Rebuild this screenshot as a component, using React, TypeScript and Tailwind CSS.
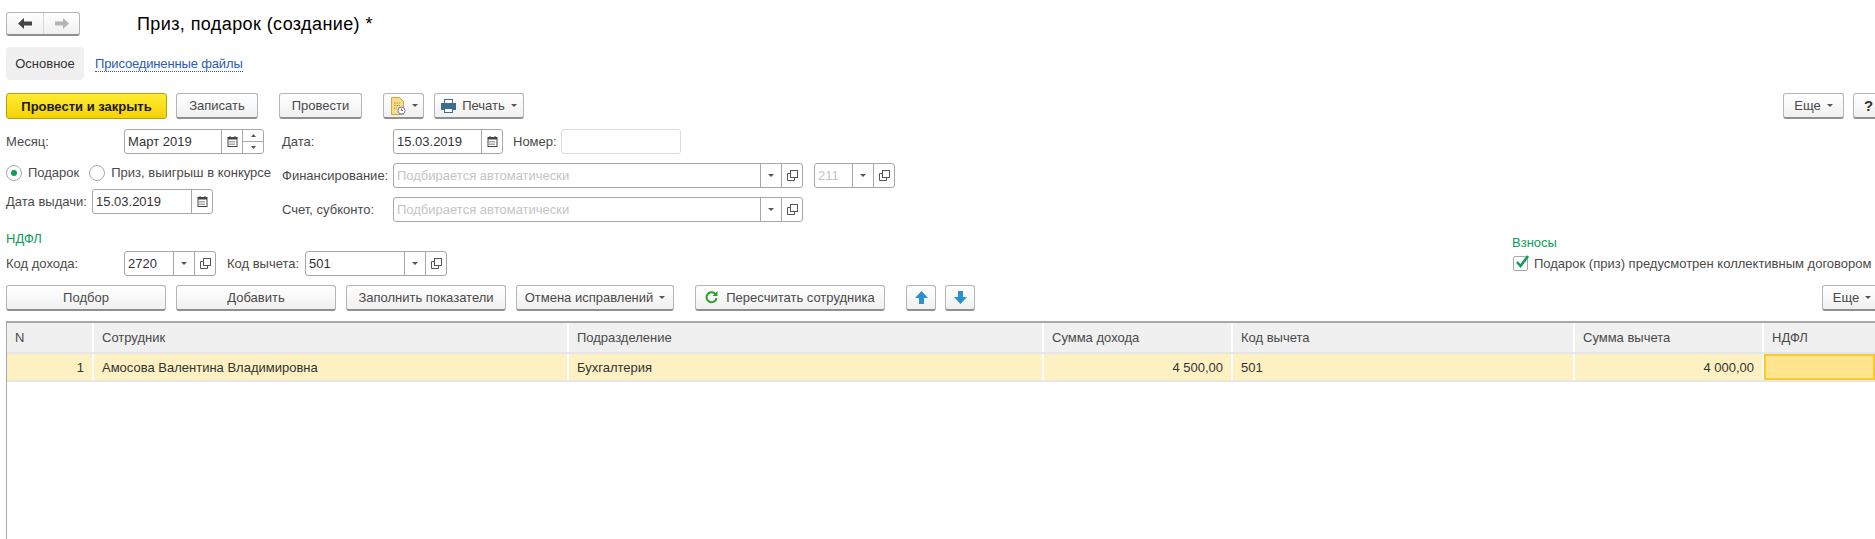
import React from "react";

const btn = "flex items-center justify-center shrink-0 bg-gradient-to-b from-white to-[#f0f0f0] border border-[#b5b5b5] border-b-2 border-b-[#8f8f8f] rounded-[3px] text-[#4a4a4a]";

function Caret({ cls = "" }: { cls?: string }) {
  return <svg width="6" height="3" viewBox="0 0 6 3" className={cls}><path d="M0 0h6L3 3z" fill="#555" /></svg>;
}
function Cal() {
  return (
    <svg width="11" height="11" viewBox="0 0 11 11">
      <rect x="1" y="1.5" width="9" height="9" fill="none" stroke="#444" />
      <rect x="1" y="1" width="9" height="2.5" fill="#444" />
      <path d="M3 0v2M8 0v2" stroke="#444" />
      <path d="M2.5 5.5h6M2.5 7h6M2.5 8.5h6" stroke="#555" strokeDasharray="1 1" />
    </svg>
  );
}
function Open() {
  return (
    <svg width="11" height="11" viewBox="0 0 11 11" fill="none" stroke="#555">
      <rect x="3.5" y="0.5" width="7" height="7" />
      <path d="M3.5 3.5h-3v7h7v-3" />
    </svg>
  );
}
function Cell({ w, children }: { w: string; children: React.ReactNode }) {
  return <div className={`${w} flex items-center justify-center shrink-0 h-full border-l border-[#a8a8a8]`}>{children}</div>;
}
function Field({ w, text, muted, tail, cls = "" }: { w: string; text?: string; muted?: boolean; tail: React.ReactNode; cls?: string }) {
  return (
    <div className={`${w} ${cls} h-[25px] shrink-0 flex items-center border border-[#a8a8a8] rounded-[3px] bg-white overflow-hidden`}>
      <span className={`flex-1 pl-[3px] whitespace-nowrap overflow-hidden ${muted ? "text-[#c4c4c4]" : "text-[#333]"}`}>{text}</span>
      {tail}
    </div>
  );
}
const Pick = () => (
  <>
    <Cell w="w-[21px]"><Caret /></Cell>
    <Cell w="w-[21px]"><Open /></Cell>
  </>
);

const cols: { w: string; head: string; val: string; right?: boolean }[] = [
  { w: "w-[87px]", head: "N", val: "1", right: true },
  { w: "w-[475px]", head: "Сотрудник", val: "Амосова Валентина Владимировна" },
  { w: "w-[475px]", head: "Подразделение", val: "Бухгалтерия" },
  { w: "w-[189px]", head: "Сумма дохода", val: "4 500,00", right: true },
  { w: "w-[342px]", head: "Код вычета", val: "501" },
  { w: "w-[189px]", head: "Сумма вычета", val: "4 000,00", right: true },
];

export default function App() {
  return (
    <div className="w-[1875px] h-[539px] overflow-hidden bg-white text-[13px] leading-none text-[#4a4a4a] font-['Liberation_Sans',Arial,sans-serif]">
      {/* title */}
      <div className="flex items-center h-[24px] mt-[12px] ml-[6px]">
        <div className="flex h-[24px] w-[74px] border border-[#b5b5b5] border-b-2 border-b-[#8f8f8f] rounded-[3px] bg-gradient-to-b from-white to-[#f0f0f0]">
          <div className="w-[37px] flex items-center justify-center border-r border-[#d8d8d8]">
            <svg width="14" height="11" viewBox="0 0 14 11"><path d="M6 0v3.500h8v4H6V11L0 5.500z" fill="#444" /></svg>
          </div>
          <div className="flex-1 flex items-center justify-center">
            <svg width="14" height="11" viewBox="0 0 14 11"><path d="M8 0v3.500H0v4h8V11l6-5.500z" fill="#b4b4b4" /></svg>
          </div>
        </div>
        <h1 className="ml-[57px] text-[18px] text-black tracking-[0.4px] whitespace-nowrap">Приз, подарок (создание) *</h1>
      </div>
      {/* tabs */}
      <div className="flex items-center h-[33px] mt-[11px] ml-[6px]">
        <div className="w-[78px] h-full bg-[#f0f0f0] rounded-[4px] flex items-center justify-center text-[#333]">Основное</div>
        <a className="ml-[11px] text-[#2c5bb5] border-b border-dotted border-[#2c5bb5] leading-[15px] tracking-[-0.15px]">Присоединенные файлы</a>
      </div>
      {/* command bar */}
      <div className="flex items-center h-[26px] mt-[13px] ml-[6px]">
        <button className="w-[161px] h-[26px] flex items-center justify-center bg-gradient-to-b from-[#ffec30] to-[#f5d200] border border-[#b9a000] rounded-[3px] text-[#1a1a00] font-bold">Провести и закрыть</button>
        <button className={`${btn} w-[82px] h-[26px] ml-[9px]`}>Записать</button>
        <button className={`${btn} w-[83px] h-[26px] ml-[21px]`}>Провести</button>
        <button className={`${btn} w-[41px] h-[26px] ml-[21px] gap-[6px]`}>
          <svg width="16" height="18" viewBox="0 0 16 18">
            <path d="M1.500.5h8l4 4v13h-12z" fill="#f6dc8e" stroke="#c9a94a" />
            <path d="M4 6h6M4 8.500h6M4 11h3" stroke="#b5923a" strokeDasharray="1.500 1" />
            <circle cx="11.500" cy="13.500" r="3.500" fill="#fff" stroke="#5e7fb5" />
            <path d="M11.500 11.500v2h1.500" stroke="#c8453a" fill="none" />
          </svg>
          <Caret />
        </button>
        <button className={`${btn} w-[90px] h-[26px] ml-[10px] gap-[6px]`}>
          <svg width="15" height="14" viewBox="0 0 15 14">
            <rect x="3.500" y="0.500" width="8" height="4" fill="#fff" stroke="#3f6d8c" />
            <path d="M0 4h15v7h-3v-2H3v2H0z" fill="#3f6d8c" />
            <rect x="3.500" y="9.500" width="8" height="4" fill="#fff" stroke="#3f6d8c" />
          </svg>
          Печать
          <Caret />
        </button>
        <div className="flex-1" />
        <button className={`${btn} w-[61px] h-[26px] gap-[6px]`}>Еще <Caret /></button>
        <button className={`${btn} w-[40px] h-[26px] ml-[9px] -mr-[18px] font-bold text-[#333] justify-start pl-[10px] text-[15px]`}>?</button>
      </div>
      {/* form */}
      <div className="flex h-[93px] mt-[10px] ml-[6px]">
        <div className="w-[276px] shrink-0 flex flex-col">
          <div className="flex items-center h-[25px]">
            <span className="w-[118px]">Месяц:</span>
            <div className="w-[140px] h-[25px] flex items-center border border-[#a8a8a8] rounded-[3px] overflow-hidden">
              <span className="flex-1 pl-[3px] text-[#333]">Март 2019</span>
              <Cell w="w-[21px]"><Cal /></Cell>
              <div className="w-[21px] h-full border-l border-[#a8a8a8] flex flex-col">
                <div className="flex-1 flex items-center justify-center border-b border-[#a8a8a8]"><svg width="5" height="3" viewBox="0 0 5 3"><path d="M0 3h5L2.500 0z" fill="#555" /></svg></div>
                <div className="flex-1 flex items-center justify-center"><svg width="5" height="3" viewBox="0 0 5 3"><path d="M0 0h5L2.500 3z" fill="#555" /></svg></div>
              </div>
            </div>
          </div>
          <div className="flex items-center h-[17px] mt-[10px]">
            <span className="w-[16px] h-[16px] rounded-full border border-[#a8a8a8] flex items-center justify-center"><span className="w-[6px] h-[6px] rounded-full bg-[#0f9d58]" /></span>
            <span className="ml-[6px]">Подарок</span>
            <span className="w-[16px] h-[16px] rounded-full border border-[#a8a8a8] ml-[10px]" />
            <span className="ml-[6px] whitespace-nowrap">Приз, выигрыш в конкурсе</span>
          </div>
          <div className="flex items-center h-[25px] mt-[8px]">
            <span className="w-[86px] whitespace-nowrap">Дата выдачи:</span>
            <Field w="w-[121px]" text="15.03.2019" tail={<Cell w="w-[21px]"><Cal /></Cell>} />
          </div>
        </div>
        <div className="flex flex-col">
          <div className="flex items-center h-[25px]">
            <span className="w-[111px]">Дата:</span>
            <Field w="w-[110px]" text="15.03.2019" tail={<Cell w="w-[21px]"><Cal /></Cell>} />
            <span className="ml-[10px] w-[48px]">Номер:</span>
            <div className="w-[120px] h-[25px] border border-[#dcdcdc] rounded-[3px]" />
          </div>
          <div className="flex items-center h-[25px] mt-[9px]">
            <span className="w-[111px] whitespace-nowrap">Финансирование:</span>
            <Field w="w-[410px]" text="Подбирается автоматически" muted tail={<Pick />} />
            <Field w="w-[81px]" cls="ml-[11px]" text="211" muted tail={<Pick />} />
          </div>
          <div className="flex items-center h-[25px] mt-[9px]">
            <span className="w-[111px] whitespace-nowrap">Счет, субконто:</span>
            <Field w="w-[410px]" text="Подбирается автоматически" muted tail={<Pick />} />
          </div>
        </div>
      </div>
      {/* ndfl */}
      <div className="flex justify-between h-[46px] mt-[7px] ml-[6px]">
        <div>
          <div className="text-[#0a9e58] h-[16px] mt-[2px] leading-[16px]">НДФЛ</div>
          <div className="flex items-center h-[25px] mt-[4px]">
            <span className="w-[118px]">Код дохода:</span>
            <Field w="w-[92px]" text="2720" tail={<Pick />} />
            <span className="ml-[11px] w-[78px] whitespace-nowrap">Код вычета:</span>
            <Field w="w-[142px]" text="501" tail={<Pick />} />
          </div>
        </div>
        <div className="w-[363px]">
          <div className="text-[#0a9e58] h-[16px] leading-[16px] mt-[6px]">Взносы</div>
          <div className="flex items-center h-[16px] mt-[4px] ml-[1px]">
            <span className="relative w-[15px] h-[15px] border border-[#a8a8a8] rounded-[2px] shrink-0">
              <svg className="absolute -top-[3px] left-[1px]" width="15" height="15" viewBox="0 0 15 15"><path d="M2 8l3.500 4L13 2" fill="none" stroke="#0a9e58" strokeWidth="2.500" /></svg>
            </span>
            <span className="ml-[6px] whitespace-nowrap">Подарок (приз) предусмотрен коллективным договором</span>
          </div>
        </div>
      </div>
      {/* table bar */}
      <div className="flex items-center h-[26px] mt-[10px] ml-[6px]">
        <button className={`${btn} w-[160px] h-[26px]`}>Подбор</button>
        <button className={`${btn} w-[160px] h-[26px] ml-[10px]`}>Добавить</button>
        <button className={`${btn} w-[160px] h-[26px] ml-[10px]`}>Заполнить показатели</button>
        <button className={`${btn} w-[158px] h-[26px] ml-[10px] gap-[6px]`}>Отмена исправлений <Caret /></button>
        <button className={`${btn} w-[190px] h-[26px] ml-[21px] gap-[8px]`}>
          <svg width="13" height="13" viewBox="0 0 13 13" fill="none"><path d="M10.500 3.200A5 5 0 1 0 11.500 7" stroke="#2f9e2f" strokeWidth="2" /><path d="M12.500 0v5h-5z" fill="#2f9e2f" /></svg>
          Пересчитать сотрудника
        </button>
        <button className={`${btn} w-[30px] h-[26px] ml-[21px]`}>
          <svg width="13" height="13" viewBox="0 0 13 13"><path d="M6.500 0L13 7H9v6H4V7H0z" fill="#2b8fd0" /></svg>
        </button>
        <button className={`${btn} w-[30px] h-[26px] ml-[9px]`}>
          <svg width="13" height="13" viewBox="0 0 13 13"><path d="M6.500 13L13 6H9V0H4v6H0z" fill="#2b8fd0" /></svg>
        </button>
        <div className="flex-1" />
        <button className={`${btn} w-[60px] h-[26px] -mr-[7px] gap-[6px]`}>Еще <Caret /></button>
      </div>
      {/* table */}
      <div className="mt-[10px] ml-[6px] h-[218px] border-t-2 border-l border-[#a8a8a8] flex flex-col">
        <div className="flex h-[31px] shrink-0 border-b-2 border-[#e6e6e6]">
          {cols.map((c) => (
            <div key={c.head} className={`${c.w} shrink-0 bg-[#f0f0f0] border-r-2 border-white flex items-center pl-[8px]`}>{c.head}</div>
          ))}
          <div className="flex-1 bg-[#f0f0f0] flex items-center pl-[8px]">НДФЛ</div>
        </div>
        <div className="flex h-[28px] shrink-0 border-b-2 border-[#e6e6e6] text-[#333]">
          {cols.map((c) => (
            <div key={c.head} className={`${c.w} shrink-0 bg-[#fdf1c4] border-r-2 border-white flex items-center px-[8px] ${c.right ? "justify-end" : ""}`}>{c.val}</div>
          ))}
          <div className="flex-1 bg-[#fee58e] border-2 border-[#f9c92d]" />
        </div>
      </div>
    </div>
  );
}
